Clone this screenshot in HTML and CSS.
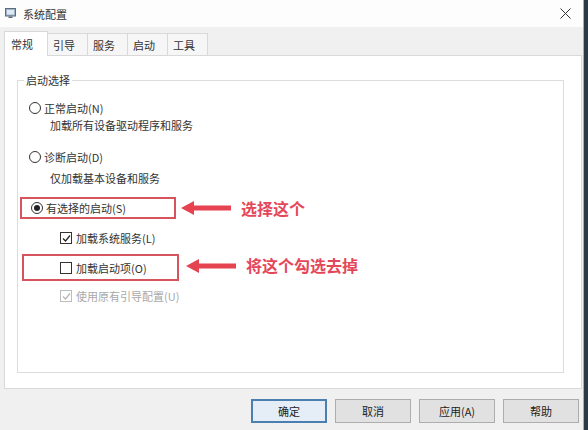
FILE: index.html
```html
<!DOCTYPE html>
<html lang="zh">
<head>
<meta charset="utf-8">
<title>系统配置</title>
<link rel="stylesheet" href="styles.css">
</head>
<body>
<div class="window">
  <div class="titlebar">
    <svg class="app-icon" width="11" height="11" viewBox="0 0 11 11">
      <rect x="0.5" y="0.5" width="10" height="7.5" fill="#9fb4c8" stroke="#5a6b7c"/>
      <rect x="2" y="2" width="7" height="4.5" fill="#dfe9f3"/>
      <rect x="3.5" y="8.5" width="4" height="1.5" fill="#5a6b7c"/>
    </svg>
    <span class="title">系统配置</span>
    <svg class="close" width="11" height="11" viewBox="0 0 11 11">
      <path d="M0.5 0.5 L10.5 10.5 M10.5 0.5 L0.5 10.5" stroke="#333" stroke-width="1" fill="none"/>
    </svg>
  </div>
  <div class="client">
    <div class="tabs">
      <div class="tab active">常规</div>
      <div class="tab">引导</div>
      <div class="tab">服务</div>
      <div class="tab">启动</div>
      <div class="tab">工具</div>
    </div>
    <div class="panel">
      <div class="group">
        <span class="legend">启动选择</span>
        <div class="row r1"><span class="radio"></span>正常启动(N)</div>
        <div class="desc d1">加载所有设备驱动程序和服务</div>
        <div class="row r2"><span class="radio"></span>诊断启动(D)</div>
        <div class="desc d2">仅加载基本设备和服务</div>
        <div class="annot a1">
          <div class="redbox box1"><span class="radio on"></span>有选择的启动(S)</div>
          <svg class="arrow" width="50" height="14" viewBox="0 0 50 14"><polygon points="0,7 13,0 13,4.5 50,4.5 50,9.5 13,9.5 13,14" fill="#e5434f"/></svg>
          <span class="note">选择这个</span>
        </div>
        <div class="row sub c1"><span class="check"><svg width="11" height="11" viewBox="0 0 11 11"><polyline points="2,5.5 4.5,8 9,2.5" fill="none" stroke="#222" stroke-width="1.2"/></svg></span>加载系统服务(L)</div>
        <div class="annot a2">
          <div class="redbox box2"><span class="check"></span>加载启动项(O)</div>
          <svg class="arrow" width="50" height="14" viewBox="0 0 50 14"><polygon points="0,7 13,0 13,4.5 50,4.5 50,9.5 13,9.5 13,14" fill="#e5434f"/></svg>
          <span class="note">将这个勾选去掉</span>
        </div>
        <div class="row sub c3 disabled"><span class="check"><svg width="11" height="11" viewBox="0 0 11 11"><polyline points="2,5.5 4.5,8 9,2.5" fill="none" stroke="#b5b5b5" stroke-width="1.2"/></svg></span>使用原有引导配置(U)</div>
      </div>
    </div>
    <div class="buttons">
      <button class="btn default">确定</button>
      <button class="btn">取消</button>
      <button class="btn">应用(A)</button>
      <button class="btn">帮助</button>
    </div>
  </div>
</div>
</body>
</html>
```
FILE: styles.css
```css
html, body {
  margin: 0;
  padding: 0;
}
body {
  width: 588px;
  height: 430px;
  overflow: hidden;
  background: #2e3946;
  font-family: "Noto Sans CJK SC", "Noto Sans", sans-serif;
  font-size: 11px;
  color: #333;
}
.window {
  width: 584px;
  height: 430px;
  background: #f0f0f0;
  border-right: 1px solid #9fb0c2;
  box-sizing: border-box;
  display: flex;
  flex-direction: column;
}
.titlebar {
  height: 27px;
  background: #fdfdfd;
  display: flex;
  align-items: center;
  padding: 0 0 0 5px;
  flex: none;
}
.app-icon {
  margin-right: 7px;
}
.title {
  font-size: 11px;
  color: #333;
  flex: 1;
}
.close {
  margin-right: 12px;
}
.client {
  flex: 1;
  display: flex;
  flex-direction: column;
  padding-top: 4px;
}
.tabs {
  display: flex;
  align-items: flex-end;
  height: 24px;
  margin-left: 4px;
  position: relative;
  z-index: 1;
}
.tab {
  width: 41px;
  height: 22px;
  box-sizing: border-box;
  border: 1px solid #d9d9d9;
  border-bottom: none;
  background: #f6f6f6;
  padding: 3px 0 0 5px;
  line-height: 16px;
  color: #333;
  margin-left: -1px;
}
.tab.active {
  width: 44px;
  height: 25px;
  margin-left: 0;
  margin-bottom: -1px;
  background: #fff;
  padding: 4px 0 0 6px;
  z-index: 2;
}
.panel {
  margin-left: 4px;
  width: 578px;
  height: 334px;
  box-sizing: border-box;
  background: #fff;
  border: 1px solid #d9d9d9;
  padding: 24px 0 0 12px;
}
.group {
  position: relative;
  width: 547px;
  height: 293px;
  box-sizing: border-box;
  border: 1px solid #dcdcdc;
  padding-left: 0;
}
.legend {
  position: absolute;
  left: 6px;
  top: -8px;
  padding: 0 2px;
  background: #fff;
  line-height: 14px;
  color: #333;
}
.row {
  display: flex;
  align-items: center;
  height: 16px;
  line-height: 16px;
  padding-left: 11px;
}
.desc {
  height: 14px;
  line-height: 14px;
  padding-left: 32px;
}
.r1 { margin-top: 19px; }
.d1 { margin-top: 2px; }
.r2 { margin-top: 17px; }
.d2 { margin-top: 6px; }
.a1 { margin-top: 12px; }
.c1 { margin-top: 11px; }
.a2 { margin-top: 8px; }
.c3 { margin-top: 7px; }
.row.sub {
  padding-left: 42px;
}
.radio {
  width: 12px;
  height: 12px;
  box-sizing: border-box;
  border: 1px solid #333;
  border-radius: 50%;
  margin-right: 3px;
  flex: none;
  display: flex;
  align-items: center;
  justify-content: center;
}
.radio.on::after {
  content: "";
  width: 6px;
  height: 6px;
  border-radius: 50%;
  background: #222;
}
.check {
  width: 12px;
  height: 12px;
  box-sizing: border-box;
  border: 1px solid #333;
  margin-right: 4px;
  flex: none;
  display: flex;
  align-items: center;
  justify-content: center;
}
.check svg {
  display: block;
  flex: none;
}
.disabled {
  color: #a8a8a8;
}
.disabled .check {
  border-color: #bcbcbc;
}
.annot {
  display: flex;
  align-items: center;
}
.redbox {
  box-sizing: border-box;
  border: 2px solid #d6545e;
  display: flex;
  align-items: center;
}
.box1 {
  margin-left: 2px;
  width: 156px;
  height: 22px;
  padding-left: 9px;
}
.box2 {
  margin-left: 4px;
  width: 157px;
  height: 27px;
  padding-left: 36px;
}
.box2 .check {
  margin-right: 4px;
}
.arrow {
  display: block;
  flex: none;
}
.a1 .arrow { margin-left: 5px; }
.a2 .arrow { margin-left: 7px; margin-top: -3px; }
.note {
  margin-left: 10px;
  font-size: 16px;
  font-weight: bold;
  color: #e4475a;
  line-height: 20px;
}
.a2 .note { margin-top: -5px; }
.buttons {
  display: flex;
  justify-content: flex-end;
  gap: 8px;
  margin-top: 10px;
  padding-right: 4px;
}
.btn {
  width: 76px;
  height: 24px;
  box-sizing: border-box;
  background: #e1e1e1;
  border: 1px solid #adadad;
  font-family: "Noto Sans CJK SC", "Noto Sans", sans-serif;
  font-size: 11px;
  color: #222;
  padding: 0;
  margin: 0;
}
.btn.default {
  background: #e5eef7;
  border: 2px solid #4a7fb0;
}
```
